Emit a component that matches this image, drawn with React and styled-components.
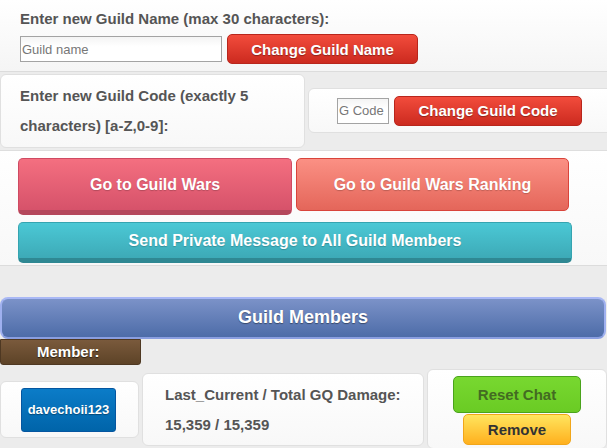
import React from "react";
import styled, { createGlobalStyle } from "styled-components";

const Global = createGlobalStyle`
  html, body { margin: 0; padding: 0; }
  body {
    background: #ececec;
    font-family: "Liberation Sans", Arial, sans-serif;
    overflow: hidden;
  }
`;

const Page = styled.div`
  width: 607px;
  height: 448px;
  overflow: hidden;
  background: #ececec;
`;

const NameSection = styled.section`
  height: 61px;
  padding: 10px 0 0 20px;
  background: linear-gradient(#ffffff, #f5f5f5);
  border-bottom: 1px solid #dcdcdc;
`;

const Label = styled.div`
  font-size: 15px;
  font-weight: bold;
  color: #555;
  line-height: ${(p) => p.$lh || 18}px;
  white-space: nowrap;
`;

const FormRow = styled.div`
  display: flex;
  align-items: center;
  gap: 5px;
  margin-top: ${(p) => p.$mt || 0}px;
`;

const TextInput = styled.input`
  box-sizing: border-box;
  width: ${(p) => p.$w}px;
  height: 26px;
  margin: 0;
  padding: 0 1px;
  border: 1px solid #a3a3a3;
  background: linear-gradient(#f4f4f4, #ffffff 40%);
  font-family: "Liberation Sans", Arial, sans-serif;
  font-size: 13px;
  color: #555;
  outline: none;
  &::placeholder { color: #777; }
`;

const RedButton = styled.button`
  box-sizing: border-box;
  width: ${(p) => p.$w}px;
  height: 30px;
  border: 1px solid #b8261c;
  border-radius: 5px;
  background: linear-gradient(#f24c3c, #cc2a1f);
  color: #fff;
  font-family: "Liberation Sans", Arial, sans-serif;
  font-weight: bold;
  font-size: 15px;
  text-shadow: 0 1px 1px rgba(0, 0, 0, 0.35);
  padding: 0;
  cursor: pointer;
`;

const CodeSection = styled.section`
  display: flex;
  align-items: flex-start;
  gap: 3px;
  padding-top: 2px;
  height: 76px;
  background: #ececec;
`;

const Card = styled.div`
  box-sizing: border-box;
  background: linear-gradient(#ffffff, #f8f8f8);
  border: 1px solid #e0e0e0;
  border-radius: 6px;
`;

const CodeLabelCard = styled(Card)`
  width: 305px;
  height: 74px;
  padding: 6px 19px;
`;

const CodeFormCard = styled(Card)`
  flex: 1;
  margin-top: 14px;
  margin-right: -6px;
  height: 45px;
  display: flex;
  align-items: center;
  gap: 5px;
  padding-left: 28px;
`;

const ActionSection = styled.section`
  background: linear-gradient(#ffffff, #f8f8f8);
  border-top: 1px solid #dedede;
  border-bottom: 1px solid #dcdcdc;
  padding: 7px 0 2px 18px;
  display: flex;
  flex-direction: column;
  gap: 7px;
`;

const ButtonRow = styled.div`
  display: flex;
  align-items: flex-start;
  gap: 4px;
`;

const FlatButton = styled.button`
  box-sizing: border-box;
  width: ${(p) => p.$w}px;
  height: ${(p) => p.$h}px;
  border: 1px solid ${(p) => p.$border};
  border-bottom: ${(p) => (p.$depth ? `${p.$depth}px solid ${p.$shadow}` : `1px solid ${p.$border}`)};
  border-radius: 5px;
  background: linear-gradient(${(p) => p.$top}, ${(p) => p.$bottom});
  color: #fff;
  font-family: "Liberation Sans", Arial, sans-serif;
  font-weight: bold;
  font-size: 16px;
  text-shadow: 0 1px 1px rgba(0, 0, 0, 0.2);
  padding: 0;
  cursor: pointer;
`;

const Gap = styled.div`
  height: 31px;
`;

const MembersHeader = styled.div`
  box-sizing: border-box;
  width: 606px;
  height: 42px;
  border: 2px solid #9fb0ef;
  border-top-color: #a9b8f5;
  border-bottom-color: #8a9ee0;
  border-radius: 8px;
  background: linear-gradient(#7b92c8, #4d6ca8);
  color: #fff;
  font-size: 18px;
  font-weight: bold;
  text-align: center;
  line-height: 37px;
  text-shadow: 0 1px 1px rgba(0, 0, 0, 0.4);
`;

const MemberTag = styled.div`
  box-sizing: border-box;
  width: 141px;
  height: 26px;
  border: 1px solid #4e3822;
  border-radius: 0 0 3px 3px;
  background: linear-gradient(#7a5a3c, #5d4327);
  color: #fff;
  font-size: 15px;
  font-weight: bold;
  line-height: 24px;
  padding-left: 36px;
  text-shadow: 0 1px 1px rgba(0, 0, 0, 0.6);
`;

const MemberRow = styled.div`
  display: flex;
  align-items: center;
  padding-top: 4px;
`;

const NameCard = styled(Card)`
  width: 141px;
  height: 57px;
  padding: 6px 0 0 20px;
  margin-right: 3px;
`;

const NameButton = styled.button`
  box-sizing: border-box;
  width: 95px;
  height: 44px;
  border: 1px solid #0556a0;
  border-radius: 3px;
  background: linear-gradient(#0b7cc8, #0064a9);
  color: #fff;
  font-family: "Liberation Sans", Arial, sans-serif;
  font-weight: bold;
  font-size: 13px;
  text-shadow: 0 1px 1px rgba(0, 0, 0, 0.35);
  padding: 0;
`;

const DamageCard = styled(Card)`
  width: 286px;
  height: 73px;
  padding: 6px 22px;
  margin-right: 3px;
`;

const ActionsCard = styled(Card)`
  width: 180px;
  height: 80px;
  flex-shrink: 0;
  display: flex;
  flex-direction: column;
  align-items: center;
  padding-top: 6px;
  gap: 1px;
`;

const SmallButton = styled.button`
  box-sizing: border-box;
  width: ${(p) => p.$w}px;
  height: ${(p) => p.$h}px;
  border: 1px solid ${(p) => p.$border};
  border-radius: 5px;
  background: linear-gradient(${(p) => p.$top}, ${(p) => p.$bottom});
  color: ${(p) => p.$color};
  font-family: "Liberation Sans", Arial, sans-serif;
  font-weight: bold;
  font-size: 15px;
  padding: 0;
`;

export default function App() {
  return (
    <Page>
      <Global />
      <NameSection>
        <Label>Enter new Guild Name (max 30 characters):</Label>
        <FormRow $mt={6}>
          <TextInput $w={202} placeholder="Guild name" />
          <RedButton $w={191}>Change Guild Name</RedButton>
        </FormRow>
      </NameSection>

      <CodeSection>
        <CodeLabelCard>
          <Label $lh={30}>
            Enter new Guild Code (exactly 5
            <br />
            characters) [a-Z,0-9]:
          </Label>
        </CodeLabelCard>
        <CodeFormCard>
          <TextInput $w={52} placeholder="G Code" />
          <RedButton $w={188}>Change Guild Code</RedButton>
        </CodeFormCard>
      </CodeSection>

      <ActionSection>
        <ButtonRow>
          <FlatButton
            $w={274}
            $h={57}
            $top="#f46f80"
            $bottom="#d6526a"
            $border="#cf4a62"
            $depth={5}
            $shadow="#b4475b"
          >
            Go to Guild Wars
          </FlatButton>
          <FlatButton
            $w={273}
            $h={53}
            $top="#fb9084"
            $bottom="#e4665a"
            $border="#d9443b"
          >
            Go to Guild Wars Ranking
          </FlatButton>
        </ButtonRow>
        <FlatButton
          $w={554}
          $h={41}
          $top="#4bc8d5"
          $bottom="#3daab7"
          $border="#35a4b0"
          $depth={5}
          $shadow="#2f8893"
        >
          Send Private Message to All Guild Members
        </FlatButton>
      </ActionSection>

      <Gap />

      <MembersHeader>Guild Members</MembersHeader>
      <MemberTag>Member:</MemberTag>

      <MemberRow>
        <NameCard>
          <NameButton>davechoii123</NameButton>
        </NameCard>
        <DamageCard>
          <Label $lh={30}>
            Last_Current / Total GQ Damage:
            <br />
            15,359 / 15,359
          </Label>
        </DamageCard>
        <ActionsCard>
          <SmallButton
            $w={128}
            $h={37}
            $top="#78d830"
            $bottom="#6acb24"
            $border="#4aa31c"
            $color="#436b22"
          >
            Reset Chat
          </SmallButton>
          <SmallButton
            $w={108}
            $h={31}
            $top="#ffe55e"
            $bottom="#ffb01e"
            $border="#f1a61a"
            $color="#333"
          >
            Remove
          </SmallButton>
        </ActionsCard>
      </MemberRow>
    </Page>
  );
}
